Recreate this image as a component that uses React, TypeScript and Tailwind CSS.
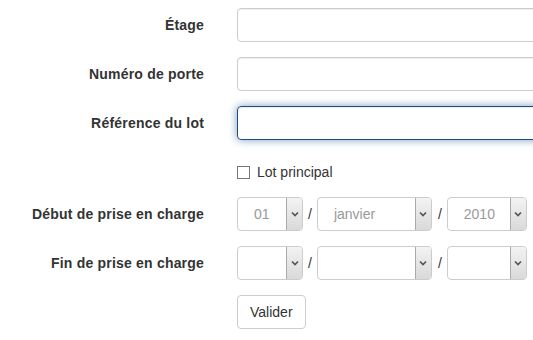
import React from "react";

function Chevron() {
  return (
    <svg width="8" height="6" viewBox="0 0 8 6" className="text-[#555]">
      <polyline points="1,1.5 4,4.5 7,1.5" fill="none" stroke="currentColor" strokeWidth="1.7" />
    </svg>
  );
}

function Select({ className, value }: { className: string; value?: string }) {
  return (
    <div className={`flex h-[34px] items-stretch rounded-[4px] border border-[#ccc] bg-white ${className}`}>
      <div className="flex flex-1 items-center pl-[16px] text-[#999]">{value}</div>
      <div className="flex w-[16px] items-center justify-center rounded-r-[3px] border-l border-[#aaa] bg-gradient-to-b from-[#f3f3f3] to-[#d9d9d9]">
        <Chevron />
      </div>
    </div>
  );
}

function DateRow({ label, d, m, y }: { label: string; d?: string; m?: string; y?: string }) {
  return (
    <>
      <label className="pt-[7px] text-right font-bold leading-[20px] tracking-[0.2px]">{label}</label>
      <div className="flex items-center">
        <Select className="w-[66px]" value={d} />
        <span className="mx-[5px]">/</span>
        <Select className="w-[115px]" value={m} />
        <span className="ml-[6px] mr-[5px]">/</span>
        <Select className="w-[80px]" value={y} />
      </div>
    </>
  );
}

export default function App() {
  return (
    <div className="h-[340px] w-[533px] overflow-hidden bg-white pt-[8px] font-['Liberation_Sans',Arial,sans-serif] text-[14px] text-[#333]">
      <div className="grid grid-cols-[204px_1fr] gap-x-[33px] gap-y-[15px]">
        <label className="pt-[7px] text-right font-bold leading-[20px] tracking-[0.2px]">Étage</label>
        <div className="h-[34px] w-[340px] rounded-[4px] border border-[#ccc] shadow-[inset_0_1px_1px_rgba(0,0,0,0.075)]" />

        <label className="pt-[7px] text-right font-bold leading-[20px] tracking-[0.2px]">Numéro de porte</label>
        <div className="h-[34px] w-[340px] rounded-[4px] border border-[#ccc] shadow-[inset_0_1px_1px_rgba(0,0,0,0.075)]" />

        <label className="pt-[7px] text-right font-bold leading-[20px] tracking-[0.2px]">Référence du lot</label>
        <div className="h-[34px] w-[340px] rounded-[4px] border border-[#1f4d82] shadow-[inset_0_1px_1px_rgba(0,0,0,0.075),0_0_8px_rgba(40,90,150,0.6)]" />

        <div />
        <div className="flex min-h-[27px] items-center pt-[7px] leading-[20px]">
          <span className="mr-[7px] h-[13px] w-[13px] border border-[#777] bg-white" />
          <span>Lot principal</span>
        </div>

        <DateRow label="Début de prise en charge" d="01" m="janvier" y="2010" />
        <DateRow label="Fin de prise en charge" />

        <div />
        <div>
          <button className="h-[34px] rounded-[4px] border border-[#ccc] bg-white px-[12px] leading-[20px] text-[#333]">
            Valider
          </button>
        </div>
      </div>
    </div>
  );
}
